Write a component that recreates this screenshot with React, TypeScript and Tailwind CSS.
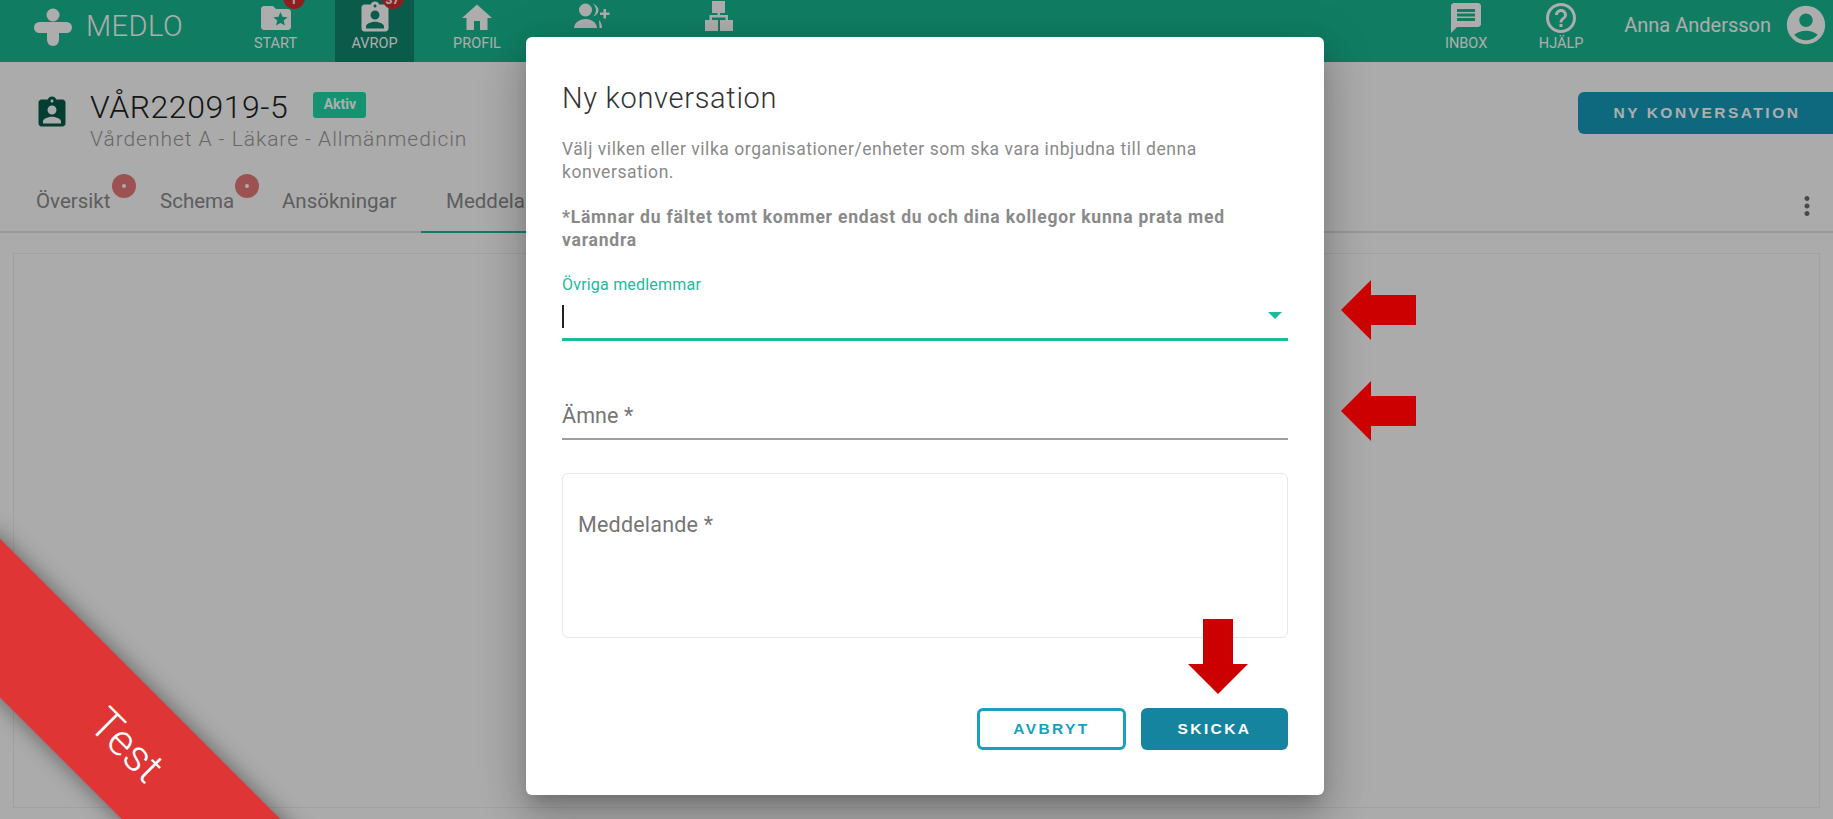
import { MdFolderSpecial, MdAssignmentInd, MdHome, MdMessage, MdHelpOutline, MdAccountCircle, MdMoreVert } from "react-icons/md";

const sans = "font-['Roboto',sans-serif]";

function NavItem({ icon, label, badge, active, className }: { icon: React.ReactNode; label?: string; badge?: string; active?: boolean; className?: string }) {
  return (
    <div className={`relative flex flex-col items-center h-[62px] ${active ? "bg-[#0f876d]" : ""} ${className ?? ""}`}>
      <div className="relative h-[42px] flex items-start justify-center text-white">
        {icon}
        {badge && (
          <span className="absolute -top-[13px] left-[25px] w-[22px] h-[22px] rounded-full bg-[#d32f2f] text-white text-[12px] font-bold flex items-center justify-center pt-[4px]">
            {badge}
          </span>
        )}
      </div>
      {label && <span className="text-white text-[14.5px] leading-none -mt-[5px]">{label}</span>}
    </div>
  );
}

function TeamAddIcon() {
  return (
    <svg className="w-[38px] h-[30px]" viewBox="0 0 38 30" fill="#fff">
      <circle cx="12.5" cy="9" r="6.5" />
      <path d="M1 27c0-6 7-9 11.500-9S24 21 24 27z" />
      <path d="M19.500 2.500c4 1.500 6 4 6 6.500s-2 5.500-5.500 6.500c2-2 3-4 3-6.500s-1.500-5-3.500-6.500z" />
      <path d="M26 19c1.800 2 3 4.500 3 8h-2.500c0-3-.500-5.500-.500-8z" />
      <path d="M30.500 8h2.500v3.500h3.500V14H33v3.500h-2.500V14H27v-2.500h3.500z" />
    </svg>
  );
}

function OrgIcon() {
  return (
    <svg className="w-[28px] h-[31px]" viewBox="0 0 28 31" fill="#fff">
      <rect x="7" y="1" width="13" height="12" />
      <rect x="12.500" y="13" width="2.500" height="3" />
      <path d="M4.500 15h18.500v6h-2.500v-3.500h-13.500v3.500h-2.500z" />
      <rect x="0" y="20" width="13" height="11" />
      <rect x="15" y="20" width="13" height="11" />
    </svg>
  );
}

function Header() {
  return (
    <header className="h-[62px] bg-[#18b992] flex items-start text-white overflow-hidden">
      <div className="w-[216px] flex items-center pl-[34px] h-[53px] gap-[14px]">
        <svg width="38" height="38" viewBox="0 0 38 38" fill="#fff">
          <circle cx="19" cy="7" r="6.500" />
          <rect x="0" y="14" width="38" height="11" rx="5.500" />
          <rect x="13" y="14" width="12" height="24" rx="6" />
        </svg>
        <span className="text-[29px] font-light tracking-[0.5px]">MEDLO</span>
      </div>
      <NavItem className="w-[119px]" icon={<MdFolderSpecial className="w-[36px] h-[36px]" />} label="START" badge="1" />
      <NavItem className="w-[79px]" active icon={<MdAssignmentInd className="w-[36px] h-[36px]" />} label="AVROP" badge="37" />
      <NavItem className="w-[110px] ml-[8px]" icon={<MdHome className="w-[36px] h-[36px]" />} label="PROFIL" />
      <NavItem className="w-[110px] ml-[5px] pt-[1px]" icon={<TeamAddIcon />} />
      <NavItem className="w-[110px] ml-[17px]" icon={<OrgIcon />} />
      <div className="flex-1" />
      <NavItem className="w-[90px]" icon={<MdMessage className="w-[36px] h-[36px]" />} label="INBOX" />
      <NavItem className="w-[90px] ml-[5px]" icon={<MdHelpOutline className="w-[36px] h-[36px]" />} label="HJÄLP" />
      <div className="flex items-center h-[50px] ml-[18px] pr-[4px] gap-[12px]">
        <span className="text-[20px]">Anna Andersson</span>
        <MdAccountCircle className="w-[46px] h-[46px]" />
      </div>
    </header>
  );
}

function Dot({ className }: { className: string }) {
  return (
    <span className={`absolute top-[3px] w-6 h-6 rounded-full bg-[#e67a7a] flex items-center justify-center ${className}`}>
      <span className="w-1 h-1 rounded-full bg-white" />
    </span>
  );
}

function Tabs() {
  return (
    <div className="flex items-end h-[62px] border-b-2 border-[#e0e0e0] pl-[36px] pr-[12px] text-[20.5px] text-[#8a8a8a]">
      <div className="relative w-[124px] h-[60px] flex items-center">
        Översikt
        <Dot className="left-[76px]" />
      </div>
      <div className="relative w-[122px] h-[60px] flex items-center">
        Schema
        <Dot className="left-[75px]" />
      </div>
      <div className="w-[139px] h-[60px] flex items-center">Ansökningar</div>
      <div className="w-[160px] h-[62px] -mb-[2px] flex items-center border-b-2 border-[#18b992] pl-[25px]">Meddelanden</div>
      <div className="flex-1" />
      <MdMoreVert className="w-[30px] h-[30px] mb-[10px] -mr-[1px] text-[#6a6a6a]" />
    </div>
  );
}

function Page() {
  return (
    <div className="h-full flex flex-col bg-[#fcfcfc]">
      <Header />
      <div className="h-[109px] flex pt-[26px]">
        <div className="pl-[34px] pt-[7px]"><MdAssignmentInd className="w-[36px] h-[36px] text-[#075a4b]" /></div>
        <div className="ml-[20px]">
          <div className="flex items-center">
            <span className="text-[#222] text-[32px] font-light leading-[38px] tracking-[0.55px]">VÅR220919-5</span>
            <span className="ml-[25px] -mt-[5px] w-[53px] h-[26px] rounded-[3px] bg-[#20d8a9] text-white text-[14px] font-bold flex items-center justify-center">Aktiv</span>
          </div>
          <div className="text-[#999] text-[21px] font-light leading-[24px] tracking-[0.95px] mt-[1px]">Vårdenhet A - Läkare - Allmänmedicin</div>
        </div>
        <div className="flex-1" />
        <button className="w-[260px] -mr-[5px] h-[42px] mt-[4px] rounded-[6px] bg-[#169bbb] text-white text-[15.5px] font-bold tracking-[2.5px] font-['Liberation_Sans',sans-serif] pr-[2px]">NY KONVERSATION</button>
      </div>
      <Tabs />
      <div className="flex-1 mx-[13px] mt-[20px] mb-[11px] border border-[#ededed] bg-[#fdfdfd]" />
    </div>
  );
}

function Dialog() {
  return (
    <div className="absolute left-[526px] top-[37px] w-[798px] h-[758px] bg-white rounded-[6px] px-[36px] pt-[43px] shadow-[0_11px_15px_-7px_rgba(0,0,0,0.2),0_24px_38px_3px_rgba(0,0,0,0.14),0_9px_46px_8px_rgba(0,0,0,0.12)]">
      <h2 className="text-[29px] leading-[36px] font-light text-[#333] tracking-[0.7px]">Ny konversation</h2>
      <p className="mt-[22px] text-[17.5px] leading-[23px] text-[#8a8a8a] tracking-[0.55px] w-[680px]">
        Välj vilken eller vilka organisationer/enheter som ska vara inbjudna till denna konversation.
      </p>
      <p className="mt-[22px] text-[17.5px] leading-[23px] text-[#8a8a8a] font-bold tracking-[0.78px] w-[680px]">
        *Lämnar du fältet tomt kommer endast du och dina kollegor kunna prata med varandra
      </p>
      <div className="mt-[23px] relative h-[66px] border-b-[3px] border-[#1abc9c]">
        <div className="text-[16px] leading-[20px] text-[#1abc9c] tracking-[0.2px]">Övriga medlemmar</div>
        <div className="mt-[10px] w-[2px] h-[23px] bg-[#222]" />
        <div className="absolute right-[6px] top-[37px] w-0 h-0 border-x-[7px] border-t-[7px] border-x-transparent border-t-[#1abc9c]" />
      </div>
      <div className="mt-[61px] h-[38px] border-b-2 border-[#9e9e9e] text-[21.5px] leading-[28px] text-[#757575] tracking-[0.1px]">Ämne *</div>
      <div className="mt-[33px] h-[165px] border border-[#e8e8e8] rounded-[6px] pl-[15px] pt-[37px] text-[21.5px] leading-[28px] text-[#757575] tracking-[0.2px]">Meddelande *</div>
      <div className="mt-[70px] flex justify-end gap-[15px] font-['Liberation_Sans',sans-serif] font-bold text-[15.5px] tracking-[2.4px]">
        <button className="w-[149px] h-[42px] rounded-[6px] border-[3px] border-[#1a9fc0] text-[#1a9fc0]">AVBRYT</button>
        <button className="w-[147px] h-[42px] rounded-[6px] bg-[#15859f] text-white">SKICKA</button>
      </div>
    </div>
  );
}

function Arrow({ className, points }: { className: string; points: string }) {
  return (
    <svg className={`absolute ${className}`} viewBox="0 0 75 60">
      <polygon points={points} fill="#cc0000" />
    </svg>
  );
}

export default function App() {
  return (
    <div className={`relative h-screen w-full overflow-hidden ${sans}`}>
      <Page />
      <div className="absolute inset-0 bg-black/[0.32]" />
      <Dialog />
      <Arrow className="left-[1341px] top-[280px] w-[75px] h-[60px]" points="0,30 30,0 30,15 75,15 75,45 30,45 30,60" />
      <Arrow className="left-[1341px] top-[381px] w-[75px] h-[60px]" points="0,30 30,0 30,15 75,15 75,45 30,45 30,60" />
      <svg className="absolute left-[1188px] top-[619px] w-[60px] h-[75px]" viewBox="0 0 60 75">
        <polygon points="15,0 45,0 45,45 60,45 30,75 0,45 15,45" fill="#cc0000" />
      </svg>
      <div className="absolute left-[-123px] top-[689px] w-[500px] h-[112px] rotate-45 bg-[#e03535] flex items-center justify-center text-white text-[44px] font-light shadow-[0_0_22px_rgba(0,0,0,0.45)]">
        Test
      </div>
    </div>
  );
}
